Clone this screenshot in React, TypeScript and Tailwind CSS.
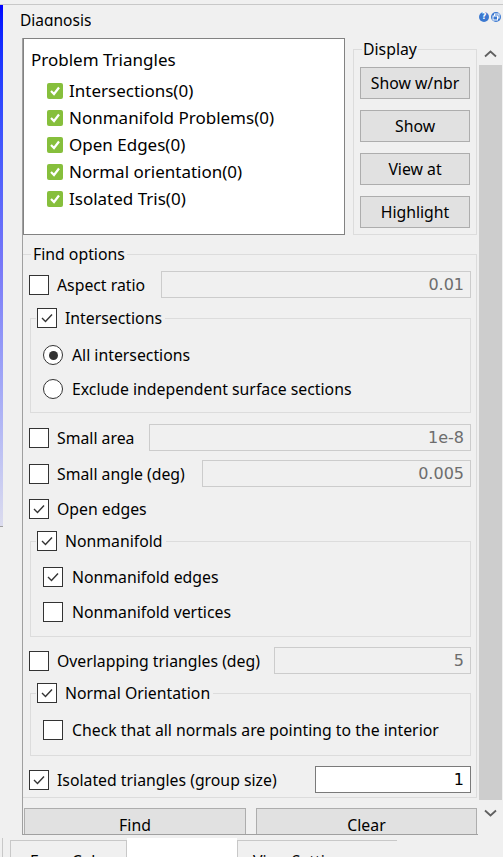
import React from "react";

function Check({ checked }: { checked?: boolean }) {
  return (
    <div className="w-[20px] h-[20px] border border-[#333333] bg-white shrink-0">
      {checked && (
        <svg width="18" height="18" viewBox="0 0 18 18">
          <polyline points="4,9 7.5,12.5 14,5.5" fill="none" stroke="#333333" strokeWidth="1.4" />
        </svg>
      )}
    </div>
  );
}

function Radio({ on }: { on?: boolean }) {
  return (
    <div className="w-[20px] h-[20px] rounded-full border border-[#333333] bg-white flex items-center justify-center shrink-0">
      {on && <div className="w-[9px] h-[9px] rounded-full bg-[#333333]" />}
    </div>
  );
}

function GreenCheck({ label }: { label: string }) {
  return (
    <div className="h-[27px] flex items-center">
      <div className="w-[16px] h-[16px] rounded-[2px] bg-[#86bf3c] flex items-center justify-center shrink-0">
        <svg width="12" height="12" viewBox="0 0 12 12">
          <polyline points="2,6 5,9 10,2.5" fill="none" stroke="#ffffff" strokeWidth="2.2" />
        </svg>
      </div>
      <span className="ml-[6px] text-black whitespace-nowrap">{label}</span>
    </div>
  );
}

function DispButton({ label }: { label: string }) {
  return (
    <div className="w-[110px] h-[32px] border border-[#adadad] bg-[#e1e1e1] flex items-center justify-center text-black">
      {label}
    </div>
  );
}

function CheckRow({ label, checked, children }: { label: string; checked?: boolean; children?: React.ReactNode }) {
  return (
    <div className="flex items-center h-[27px]">
      <Check checked={checked} />
      <span className="ml-[8px] text-black whitespace-nowrap">{label}</span>
      {children}
    </div>
  );
}

function GrayField({ value, w }: { value: string; w: string }) {
  return (
    <div
      className={`ml-auto h-[27px] ${w} border border-[#cccccc] bg-[#f0f0f0] flex items-center justify-end pr-[6px] text-[#6d6d6d] font-['DejaVu_Sans',sans-serif] text-[16px]`}
    >
      {value}
    </div>
  );
}

function SubGroup({
  label,
  boxClass,
  children,
}: {
  label: string;
  boxClass: string;
  children: React.ReactNode;
}) {
  return (
    <div className="relative ml-[1px] pt-[10px]">
      <div className={`border border-[#dcdcdc] ${boxClass}`}>{children}</div>
      <div className="absolute top-0 left-[6px] h-[20px] flex items-center bg-[#f0f0f0] px-[1px] pr-[3px]">
        <Check checked />
        <span className="ml-[8px] text-black whitespace-nowrap">{label}</span>
      </div>
    </div>
  );
}

function ScrollChevron({ down }: { down?: boolean }) {
  return (
    <svg width="13" height="8" viewBox="0 0 13 8">
      <polyline
        points={down ? "1,1.5 6.5,6.5 12,1.5" : "1,6.5 6.5,1.5 12,6.5"}
        fill="none"
        stroke="#606060"
        strokeWidth="1.8"
      />
    </svg>
  );
}

export default function App() {
  return (
    <div className="w-[503px] h-[857px] bg-[#f0f0f0] overflow-hidden font-['Noto_Sans',sans-serif] text-[15.8px] leading-[22px] text-black">
      <div className="h-[4px]" />
      <div className="border-t border-[#c8c8c8]" />
      <div className="flex h-[830px]">
        {/* blue side bar */}
        <div className="w-[3px] h-[522px] bg-gradient-to-b from-[#0000ff] via-[#7878f8] to-[#dcdcee] border-b border-[#a0a0a0]" />
        <div className="w-[500px] flex flex-col">
          {/* title row */}
          <div className="h-[33px] flex items-start">
            <div className="h-[21px] overflow-hidden pl-[17px] pt-[4px]">
              <span className="text-[15.5px] text-black">Diagnosis</span>
            </div>
            <div className="ml-auto mr-[2px] mt-[7px] flex gap-[2px]">
              <div className="w-[10px] h-[10px] rounded-full bg-[#3b78d0] flex items-center justify-center">
                <span className="text-white text-[8px] leading-[8px] font-bold font-['DejaVu_Sans',sans-serif]">?</span>
              </div>
              <div className="w-[10px] h-[10px] rounded-full bg-[#3b78d0] flex items-center justify-center">
                <svg width="8" height="8" viewBox="0 0 8 8">
                  <rect x="2.5" y="1" width="4.5" height="4" fill="none" stroke="#fff" strokeWidth="1" />
                  <rect x="1" y="3" width="4.5" height="4" fill="#3b78d0" stroke="#fff" strokeWidth="1" />
                </svg>
              </div>
            </div>
          </div>
          {/* frame */}
          <div className="flex h-[797px]">
            <div className="ml-[19px] w-[456px] h-[797px] border-l border-b border-[#a0a0a0] overflow-hidden flex flex-col">
              {/* top row */}
              <div className="flex h-[197px] shrink-0">
                <div className="w-[322px] h-[197px] border border-[#828282] bg-white pl-[7px] pt-[10px] text-[17px]">
                  <div className="text-black whitespace-nowrap">Problem Triangles</div>
                  <div className="mt-[6px] pl-[16px]">
                    <GreenCheck label="Intersections(0)" />
                    <GreenCheck label="Nonmanifold Problems(0)" />
                    <GreenCheck label="Open Edges(0)" />
                    <GreenCheck label="Normal orientation(0)" />
                    <GreenCheck label="Isolated Tris(0)" />
                  </div>
                </div>
                <div className="relative ml-[8px] mt-[11px] w-[124px] h-[186px] border border-[#dcdcdc] pt-[17px] pl-[6px] flex flex-col gap-[11px]">
                  <div className="absolute left-[8px] top-[-12px] bg-[#f0f0f0] px-[1px] text-black">Display</div>
                  <DispButton label="Show w/nbr" />
                  <DispButton label="Show" />
                  <DispButton label="View at" />
                  <DispButton label="Highlight" />
                </div>
              </div>
              {/* Find options */}
              <div className="relative mt-[19px] w-[454px] h-[544px] shrink-0 border-t border-r border-b border-[#dcdcdc] pt-[16px] pl-[6px] pr-[5px]">
                <div className="absolute left-[8px] top-[-12px] bg-[#f0f0f0] px-[2px] text-black">Find options</div>

                <CheckRow label="Aspect ratio">
                  <GrayField value="0.01" w="w-[310px]" />
                </CheckRow>

                <div className="mt-[10px]">
                  <SubGroup label="Intersections" boxClass="h-[95px] pt-[26px] pl-[12px]">
                    <div className="flex items-center h-[20px]">
                      <Radio on />
                      <span className="ml-[9px]">All intersections</span>
                    </div>
                    <div className="flex items-center h-[20px] mt-[14px]">
                      <Radio />
                      <span className="ml-[9px] whitespace-nowrap">Exclude independent surface sections</span>
                    </div>
                  </SubGroup>
                </div>

                <div className="mt-[11px]">
                  <CheckRow label="Small area">
                    <GrayField value="1e-8" w="w-[322px]" />
                  </CheckRow>
                </div>
                <div className="mt-[9px]">
                  <CheckRow label="Small angle (deg)">
                    <GrayField value="0.005" w="w-[269px]" />
                  </CheckRow>
                </div>
                <div className="mt-[12px] flex items-center h-[20px]">
                  <Check checked />
                  <span className="ml-[8px]">Open edges</span>
                </div>

                <div className="mt-[12px]">
                  <SubGroup label="Nonmanifold" boxClass="h-[96px] pt-[25px] pl-[12px]">
                    <div className="flex items-center h-[20px]">
                      <Check checked />
                      <span className="ml-[9px]">Nonmanifold edges</span>
                    </div>
                    <div className="flex items-center h-[20px] mt-[15px]">
                      <Check />
                      <span className="ml-[9px]">Nonmanifold vertices</span>
                    </div>
                  </SubGroup>
                </div>

                <div className="mt-[10px]">
                  <CheckRow label="Overlapping triangles (deg)">
                    <GrayField value="5" w="w-[197px]" />
                  </CheckRow>
                </div>

                <div className="mt-[9px]">
                  <SubGroup label="Normal Orientation" boxClass="h-[63px] pt-[26px] pl-[12px]">
                    <div className="flex items-center h-[20px]">
                      <Check />
                      <span className="ml-[9px] whitespace-nowrap">Check that all normals are pointing to the interior</span>
                    </div>
                  </SubGroup>
                </div>

                <div className="mt-[10px]">
                  <CheckRow label="Isolated triangles (group size)" checked>
                    <div className="ml-auto h-[27px] w-[156px] border border-[#7a7a7a] bg-white flex items-center justify-end pr-[6px] text-black font-['DejaVu_Sans',sans-serif] text-[16px]">
                      1
                    </div>
                  </CheckRow>
                </div>
              </div>
              {/* buttons */}
              <div className="mt-[10px] flex shrink-0">
                <div className="ml-[1px] w-[222px] h-[34px] shrink-0 border border-[#adadad] bg-[#e1e1e1] flex items-center justify-center">
                  Find
                </div>
                <div className="ml-[10px] w-[221px] h-[34px] shrink-0 border border-[#adadad] bg-[#e1e1e1] flex items-center justify-center">
                  Clear
                </div>
              </div>
            </div>
            {/* scrollbar */}
            <div className="w-[25px] h-[797px] flex flex-col">
              <div className="h-[27px] flex items-center justify-center pt-[4px]">
                <ScrollChevron />
              </div>
              <div className="h-[735px] mx-[1px] bg-[#cdcdcd]" />
              <div className="h-[34px] flex items-center justify-center pb-[8px]">
                <ScrollChevron down />
              </div>
            </div>
          </div>
        </div>
      </div>
      {/* tabs */}
      <div className="h-[22px] flex items-end">
        <div className="w-[3px] h-[19px] border-r border-[#c8c8c8]" />
        <div className="ml-[7px] w-[117px] h-[17px] border-t border-l border-r border-[#c8c8c8] pl-[19px] pt-[9px] overflow-hidden">
          <span className="whitespace-nowrap">Error Colors</span>
        </div>
        <div className="w-[110px] h-[19px] bg-white" />
        <div className="w-[160px] h-[17px] border-t border-l border-[#c8c8c8] pl-[15px] pt-[9px] overflow-hidden">
          <span className="whitespace-nowrap">View Settings</span>
        </div>
      </div>
    </div>
  );
}
